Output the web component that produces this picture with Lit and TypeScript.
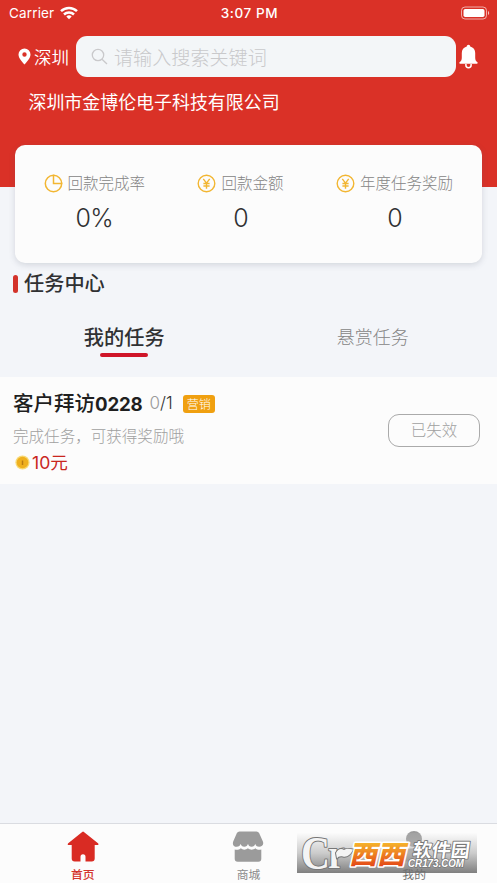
import { LitElement, html, svg, css } from "lit";
import { customElement, property } from "lit/decorators.js";

const pieIcon = svg`<g fill="none" stroke="#f2b632" stroke-width="1.5"><path d="M9.5 1.3a8.2 8.2 0 1 0 8.2 8.2H9.5z"/><path d="M9.5 1.3a8.2 8.2 0 0 1 8.2 8.2"/></g>`;
const yenIcon = svg`<g fill="none" stroke="#f2b632" stroke-width="1.4"><circle cx="9.5" cy="9.5" r="8.3"/><path d="M6.3 4.8l3.2 4.300 3.200-4.300M9.500 9.100v5.600M6.400 9.500h6.200M6.400 12h6.200"/></g>`;

const homeIcon = svg`<path fill="#d92b23" d="M15.200.9a1.500 1.500 0 0 1 1.700 0L31 12.200c1 1 .5 1.900-.7 1.900h-2.600V27.500a3 3 0 0 1-3 3h-6.200V25.700a2.500 2.500 0 0 0-5 0v4.800H7.700a3 3 0 0 1-3-3V14.100H1.900c-1.300 0-1.700-1-.7-1.900z"/>`;
const shopIcon = svg`<path fill="#9b9b9b" d="M7.500.5h17a3 3 0 0 1 2.600 1.500l3.800 8.500c1.200 3.500-1 5.300-3.700 5.300-2.300 0-3.600-1.300-3.900-3-.5 1.800-1.800 3-3.700 3s-3.200-1.300-3.600-3c-.5 1.800-1.800 3-3.700 3s-3.200-1.300-3.600-3c-.5 1.800-1.900 3-4 3C2 15.800.1 14 1.200 10.500L4.900 2A3 3 0 0 1 7.500.5z"/><path fill="#9b9b9b" d="M2.700 18.500c2.400.7 4.500.2 6.100-1.300 2 1.900 5 1.900 7.200 0 2.300 2 5.200 1.900 7.300 0 1.700 1.500 3.700 2 6 1.300v9.200a3 3 0 0 1-3 3H5.700a3 3 0 0 1-3-3z"/>`;
const userIcon = svg`<circle cx="16" cy="8" r="8" fill="#9b9b9b"/><path fill="#9b9b9b" d="M5 30.500v-5a8 8 0 0 1 8-8h6a8 8 0 0 1 8 8v5z"/>`;

@customElement("stat-item")
export class StatItem extends LitElement {
  @property() label = "";
  @property() value = "";
  @property() icon = "yen";

  static styles = css`
    :host { display: block; }
    .label { display: flex; align-items: center; gap: 5px; height: 24px; font-size: 15.500px; font-weight: 300; color: #858585; white-space: nowrap; }
    .icon { width: 19px; height: 19px; margin-top: 2px; }
    .value { margin-top: 8px; height: 32px; line-height: 32px; font-family: Inter, sans-serif; font-size: 25px; font-weight: 300; letter-spacing: -.8px; text-align: center; color: #303133; }
  `;

  render() {
    return html`
      <div class="label">
        <svg class="icon" viewBox="0 0 19 19">${this.icon === "pie" ? pieIcon : yenIcon}</svg>
        <span>${this.label}</span>
      </div>
      <div class="value">${this.value}</div>
    `;
  }
}

@customElement("site-badge")
export class SiteBadge extends LitElement {
  static styles = css`
    :host { display: block; width: 180px; height: 40px; background: linear-gradient(rgba(244, 244, 244, .08), rgba(185, 185, 185, .72) 50%, rgba(120, 120, 120, .94)); }
    .art { display: block; overflow: visible; }
    .mark { font: 700 46px "Liberation Serif", serif; }
    .stem { font: 700 40px "Liberation Serif", serif; }
    .brand { font: 900 26px "Noto Sans CJK SC", sans-serif; }
    .name { font: 700 19px "Noto Sans CJK SC", sans-serif; }
    .url { font: italic 700 10px "Liberation Sans", sans-serif; }
    .outlined { paint-order: stroke; stroke-linejoin: round; }
  `;

  render() {
    return html`
      <svg class="art" width="180" height="40" viewBox="0 0 180 40">
        <defs>
          <linearGradient id="flame" x1="0" y1="0" x2="0" y2="1">
            <stop offset="0.250" stop-color="#f6b52b" />
            <stop offset="0.850" stop-color="#e44a18" />
          </linearGradient>
        </defs>
        <g class="outlined" fill="#f4f4f4" stroke="#777" stroke-width="2">
          <text class="mark" x="4" y="35.500" textLength="29" lengthAdjust="spacingAndGlyphs">C</text>
          <text class="stem" x="31" y="35" textLength="17" lengthAdjust="spacingAndGlyphs">r</text>
          <path d="M39 20c2-4 5-5 8-3 3-2 6-1 9-.5-2 5-6 8-10 7-3-.5-5 0-6 2z" />
        </g>
        <text class="brand outlined" transform="translate(52 30.500) skewX(-13)" fill="url(#flame)" stroke="#fff" stroke-width="3" textLength="56" lengthAdjust="spacingAndGlyphs">西西</text>
        <text class="name outlined" transform="translate(115 23.500) skewX(-8)" fill="#fff" stroke="#777" stroke-width="1.800" textLength="57">软件园</text>
        <text class="url outlined" x="111" y="33.500" fill="#fff" stroke="#777" stroke-width="1.600" textLength="56" lengthAdjust="spacingAndGlyphs">CR173.COM</text>
      </svg>
    `;
  }
}

@customElement("app-root")
export class AppRoot extends LitElement {
  static styles = css`
    :host { display: flex; flex-direction: column; position: relative; box-sizing: border-box; width: 497px; height: 883px; overflow: hidden; background: #f3f5f9; font-family: "Noto Sans CJK SC", sans-serif; color: #303133; }
    * { box-sizing: border-box; }
    svg { display: block; flex: none; }
    .header { height: 187px; flex: none; background: #da3127; color: #fff; }
    .status { display: grid; grid-template-columns: 1fr auto 1fr; align-items: center; height: 26px; padding: 0 7px 0 9px; font-family: Inter, sans-serif; font-size: 13.500px; }
    .carrier { display: flex; align-items: center; gap: 6px; font-weight: 400; letter-spacing: .15px; }
    .time { font-weight: 500; font-size: 13.500px; letter-spacing: .6px; }
    .battery { justify-self: end; margin-top: -1px; }
    .search-row { display: flex; align-items: center; height: 41px; margin-top: 10px; padding-left: 18px; }
    .city { display: flex; align-items: center; gap: 3px; width: 58px; font-size: 17.500px; line-height: 24px; font-weight: 350; }
    .search { display: flex; align-items: center; width: 380px; height: 41px; padding-left: 15px; gap: 6px; border-radius: 11px; background: #f3f6f8; color: #c9c9cb; font-size: 19.100px; font-weight: 300; line-height: 28px; }
    .bell { margin-left: 3px; }
    .company { margin: 11px 0 0 28.500px; line-height: 26px; font-size: 17.950px; font-weight: 400; }
    .stats { position: relative; flex: none; display: flex; width: 467px; height: 118px; margin: -42px 0 0 15px; padding: 25px 29px 0 28.500px; justify-content: space-between; border-radius: 10px; background: #fcfcfc; box-shadow: 0 2px 6px rgba(80, 90, 110, .2); }
    .title { display: flex; align-items: center; height: 34px; margin-top: 2px; padding-left: 13px; gap: 6px; font-size: 20.200px; font-weight: 500; }
    .title-bar { width: 5px; height: 18px; margin-top: 4px; border-radius: 3px; background: #d3332b; }
    .tabs { display: grid; grid-template-columns: 1fr 1fr; height: 78px; text-align: center; }
    .tab { padding-top: 22px; line-height: 30px; font-size: 18px; font-weight: 300; color: #858585; }
    .tab.active { padding-top: 23px; font-size: 20.200px; font-weight: 500; color: #303133; }
    .tab.active::after { content: ""; display: block; width: 48px; height: 4px; margin: 1px auto 0; border-radius: 2px; background: #cf1529; }
    .task { display: flex; justify-content: space-between; height: 107px; padding: 10px 17px 0 13px; background: #fcfcfc; }
    .task-name { display: flex; align-items: center; height: 30px; white-space: nowrap; }
    .name { font-size: 20.500px; font-weight: 500; color: #1f1f1f; }
    .digits { font-family: Inter, sans-serif; font-size: 18.700px; font-weight: 700; letter-spacing: -.2px; }
    .count { margin: 2px 0 0 7px; font-family: Inter, sans-serif; font-size: 17px; font-weight: 300; color: #303133; }
    .done { color: #999; }
    .tag { width: 32px; height: 18px; margin: 4px 0 0 10px; border-radius: 3px; background: #f0a010; color: #fff; font-size: 12px; font-weight: 300; line-height: 17px; text-align: center; }
    .desc { height: 25px; margin-top: 6px; line-height: 25px; font-size: 15.550px; font-weight: 300; color: #a0a0a0; }
    .reward { display: flex; align-items: center; gap: 2px; height: 25px; margin-top: 1px; padding-left: 2px; font-size: 17.600px; color: #c9261e; }
    .coin { margin-top: 2px; }
    .amount { font-family: Inter, "Noto Sans CJK SC", sans-serif; }
    .state { width: 92px; height: 33px; margin-top: 27px; border: 1px solid #aaa; border-radius: 11px; color: #a0a0a0; font-size: 15.500px; font-weight: 300; line-height: 28px; text-align: center; }
    .tabbar { display: grid; grid-template-columns: repeat(3, 1fr); height: 60px; margin-top: auto; border-top: 1px solid #dadce1; background: #fcfcfc; }
    .nav { display: flex; flex-direction: column; align-items: center; padding-top: 7px; color: #8b8b8b; font-size: 11.800px; line-height: 18px; }
    .nav-label { position: relative; z-index: 2; margin-top: 2.500px; }
    .nav.active { color: #d3332b; font-weight: 500; }
    .nav.covered .nav-label { color: #707070; }
    .badge { position: absolute; z-index: 1; left: 297px; top: 833px; }
  `;

  render() {
    return html`
      <div class="header">
        <div class="status">
          <div class="carrier">
            <span>Carrier</span>
            <svg width="18" height="14" viewBox="0 0 18 14"><g fill="none" stroke="#fff" stroke-width="2.500"><path d="M1 5.200a11.500 11.500 0 0 1 16 0"/><path d="M4 8.500a7.200 7.200 0 0 1 10 0"/></g><path fill="#fff" d="M6.300 10.500a4 4 0 0 1 5.400 0L9 13.300z"/></svg>
          </div>
          <div class="time">3:07 PM</div>
          <svg class="battery" width="30" height="14" viewBox="0 0 30 14"><rect x="1.500" y="1" width="25" height="12" rx="3.500" fill="none" stroke="#fff" stroke-opacity=".6"/><rect x="3.500" y="3" width="21" height="8" rx="1.700" fill="#fff"/><path fill="#fff" fill-opacity=".7" d="M28 5a2.300 2.300 0 0 1 0 4z"/></svg>
        </div>
        <div class="search-row">
          <div class="city">
            <svg width="13" height="17" viewBox="0 0 13 17"><path fill="#fff" fill-rule="evenodd" d="M6.500.500a6 6 0 0 1 6 6c0 3.600-3.500 7.200-6 10-2.500-2.800-6-6.400-6-10a6 6 0 0 1 6-6zm0 3.800a2.200 2.200 0 1 0 0 4.400 2.200 2.200 0 0 0 0-4.400z"/></svg>
            <span>深圳</span>
          </div>
          <div class="search">
            <svg width="17" height="17" viewBox="0 0 17 17"><g fill="none" stroke="#c9c9cb" stroke-width="1.300"><circle cx="7" cy="7" r="5.700"/><path d="M11 11.200l5 4.800"/></g></svg>
            <span>请输入搜索关键词</span>
          </div>
          <svg class="bell" width="19" height="25" viewBox="0 0 19 25"><path fill="#fff" d="M9.500.8c1 0 1.700.8 1.700 1.800 3.200.8 5 3.200 5 6.500v4.300c0 2 .5 3.500 2 4.500.8.600.6 1.800-.4 1.800H1.200c-1 0-1.200-1.200-.4-1.800 1.500-1 2-2.500 2-4.500V9.100c0-3.300 1.800-5.700 5-6.500 0-1 .7-1.800 1.700-1.800z"/><path fill="none" stroke="#fff" stroke-width="1.500" d="M6.900 20v1.300a2.600 2.400 0 0 0 5.200 0V20"/></svg>
        </div>
        <div class="company">深圳市金博伦电子科技有限公司</div>
      </div>

      <div class="stats">
        <stat-item icon="pie" label="回款完成率" value="0%"></stat-item>
        <stat-item label="回款金额" value="0"></stat-item>
        <stat-item label="年度任务奖励" value="0"></stat-item>
      </div>

      <div class="title"><span class="title-bar"></span><span>任务中心</span></div>
      <div class="tabs">
        <div class="tab active">我的任务</div>
        <div class="tab">悬赏任务</div>
      </div>

      <div class="task">
        <div>
          <div class="task-name">
            <span class="name">客户拜访<span class="digits">0228</span></span>
            <span class="count"><span class="done">0</span>/1</span>
            <span class="tag">营销</span>
          </div>
          <div class="desc">完成任务，可获得奖励哦</div>
          <div class="reward">
            <svg class="coin" width="15" height="15" viewBox="0 0 15 15"><circle cx="7.500" cy="7.500" r="7.100" fill="#f8d974"/><circle cx="7.500" cy="7.500" r="5.800" fill="#efb01e"/><path d="M7.500 5.500v4.500" stroke="#b97c13" stroke-width="1.500"/></svg>
            <span class="amount">10元</span>
          </div>
        </div>
        <div class="state">已失效</div>
      </div>

      <div class="tabbar">
        <div class="nav active"><svg width="32" height="31" viewBox="0 0 32 31">${homeIcon}</svg><span class="nav-label">首页</span></div>
        <div class="nav"><svg width="32" height="31" viewBox="0 0 32 31">${shopIcon}</svg><span class="nav-label">商城</span></div>
        <div class="nav covered"><svg width="32" height="31" viewBox="0 0 32 31">${userIcon}</svg><span class="nav-label">我的</span></div>
      </div>
      <site-badge class="badge"></site-badge>
    `;
  }
}
